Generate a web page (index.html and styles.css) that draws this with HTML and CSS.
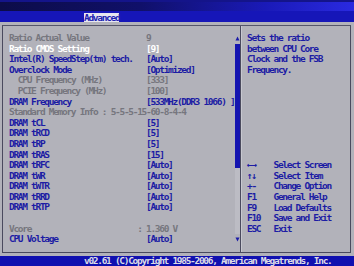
FILE: index.html
```html
<!DOCTYPE html>
<html>
<head>
<meta charset="utf-8">
<link rel="stylesheet" href="styles.css">
</head>
<body>
<div class="topbar"></div>
<div class="tabbar"><span class="tab">Advanced</span></div>
<div class="frame">
  <div class="left">
    <div class="list">
      <div class="row dim"><span class="lbl">Ratio Actual Value</span><span class="val">9</span></div>
      <div class="row hi"><span class="lbl">Ratio CMOS Setting</span><span class="val">[9]</span></div>
      <div class="row"><span class="lbl">Intel(R) SpeedStep(tm) tech.</span><span class="val">[Auto]</span></div>
      <div class="row"><span class="lbl">Overclock Mode</span><span class="val">[Optimized]</span></div>
      <div class="row dim"><span class="lbl sub">CPU Frequency (MHz)</span><span class="val">[333]</span></div>
      <div class="row dim"><span class="lbl sub">PCIE Frequency (MHz)</span><span class="val">[100]</span></div>
      <div class="row"><span class="lbl">DRAM Frequency</span><span class="val">[533MHz(DDR3 1066) ]</span></div>
      <div class="row dim"><span class="full">Standard Memory Info : 5-5-5-15-60-8-4-4</span></div>
      <div class="row"><span class="lbl">DRAM tCL</span><span class="val">[5]</span></div>
      <div class="row"><span class="lbl">DRAM tRCD</span><span class="val">[5]</span></div>
      <div class="row"><span class="lbl">DRAM tRP</span><span class="val">[5]</span></div>
      <div class="row"><span class="lbl">DRAM tRAS</span><span class="val">[15]</span></div>
      <div class="row"><span class="lbl">DRAM tRFC</span><span class="val">[Auto]</span></div>
      <div class="row"><span class="lbl">DRAM tWR</span><span class="val">[Auto]</span></div>
      <div class="row"><span class="lbl">DRAM tWTR</span><span class="val">[Auto]</span></div>
      <div class="row"><span class="lbl">DRAM tRRD</span><span class="val">[Auto]</span></div>
      <div class="row"><span class="lbl">DRAM tRTP</span><span class="val">[Auto]</span></div>
      <div class="row"></div>
      <div class="row dim"><span class="lbl">Vcore</span><span class="val colon">: 1.360 V</span></div>
      <div class="row"><span class="lbl">CPU Voltage</span><span class="val">[Auto]</span></div>
    </div>
    <div class="scroll">
      <div class="arrow"><svg width="5" height="5" viewBox="0 0 5 5"><path d="M2.5 0.5 L4.5 4.5 L0.5 4.5 Z" fill="#1a1aa8"/></svg></div>
      <div class="thumb"></div>
      <div class="track"></div>
      <div class="arrow"><svg width="5" height="5" viewBox="0 0 5 5"><path d="M0.5 0.5 L4.5 0.5 L2.5 4.5 Z" fill="#1a1aa8"/></svg></div>
    </div>
  </div>
  <div class="right">
    <div class="help">
      <div class="row">Sets the ratio</div>
      <div class="row">between CPU Core</div>
      <div class="row">Clock and the FSB</div>
      <div class="row">Frequency.</div>
    </div>
    <div class="keys">
      <div class="row"><span class="key">←→</span><span>Select Screen</span></div>
      <div class="row"><span class="key">↑↓</span><span>Select Item</span></div>
      <div class="row"><span class="key">+-</span><span>Change Option</span></div>
      <div class="row"><span class="key">F1</span><span>General Help</span></div>
      <div class="row"><span class="key">F9</span><span>Load Defaults</span></div>
      <div class="row"><span class="key">F10</span><span>Save and Exit</span></div>
      <div class="row"><span class="key">ESC</span><span>Exit</span></div>
    </div>
  </div>
</div>
<div class="footer">v02.61 (C)Copyright 1985-2006, American Megatrends, Inc.</div>
</body>
</html>
```

FILE: styles.css
```css
* { box-sizing: border-box; }
html, body { margin: 0; padding: 0; }
body {
  width: 354px;
  height: 266px;
  overflow: hidden;
  background: #b2b2ba;
  font-family: "DejaVu Sans Mono", "Liberation Mono", monospace;
  font-weight: bold;
  font-size: 9.5px;
  letter-spacing: -1.3px;
  color: #1c1ca4;
  display: flex;
  flex-direction: column;
}
.topbar {
  height: 11px;
  background: linear-gradient(to right, #0c0c48 0%, #10106a 40%, #1a1ab8 75%, #2a2ae0 100%);
  border-top: 2px solid #14148a;
}
.tabbar {
  height: 11px;
  background: #1616b8;
  padding-left: 84px;
  padding-top: 2px;
  display: flex;
}
.tab {
  display: block;
  width: 35px;
  height: 9px;
  line-height: 9px;
  background: #e6e6f0;
  color: #2020b0;
  white-space: nowrap;
}
.frame {
  margin: 3px 3px 0 2px;
  height: 229px;
  border: 1px solid #4a4a5e;
  border-top-color: #55556a;
  display: flex;
}
.left {
  width: 238px;
  display: flex;
  padding-top: 7px;
  padding-left: 6px;
  border-right: 1px solid #4a4a5e;
}
.list { width: 225.5px; }
.row {
  height: 10.6px;
  line-height: 10.6px;
  white-space: nowrap;
  display: flex;
}
.lbl { width: 137px; flex: none; }
.lbl.sub { padding-left: 8.85px; }
.val { flex: none; }
.val.colon { margin-left: -8.85px; }
.full { flex: none; }
.dim { color: #76767e; }
.hi { color: #ffffff; }
.scroll {
  width: 5px;
  display: flex;
  flex-direction: column;
}
.arrow {
  height: 10.6px;
  display: flex;
  align-items: center;
  justify-content: center;
}
.thumb {
  height: 124px;
  background: #1414b0;
}
.track {
  flex: 1;
  max-height: 66.8px;
  background: #bcbcc4;
}
.right {
  flex: 1;
  padding-top: 7px;
  padding-left: 5px;
  border-left: 1px solid #c8c8d0;
}
.help { height: 127.2px; }
.key { width: 26.5px; flex: none; }
.footer {
  margin-top: 3px;
  height: 10px;
  line-height: 10px;
  background: #1010b0;
  color: #dcdce6;
  padding-left: 84px;
  white-space: nowrap;
}
```
